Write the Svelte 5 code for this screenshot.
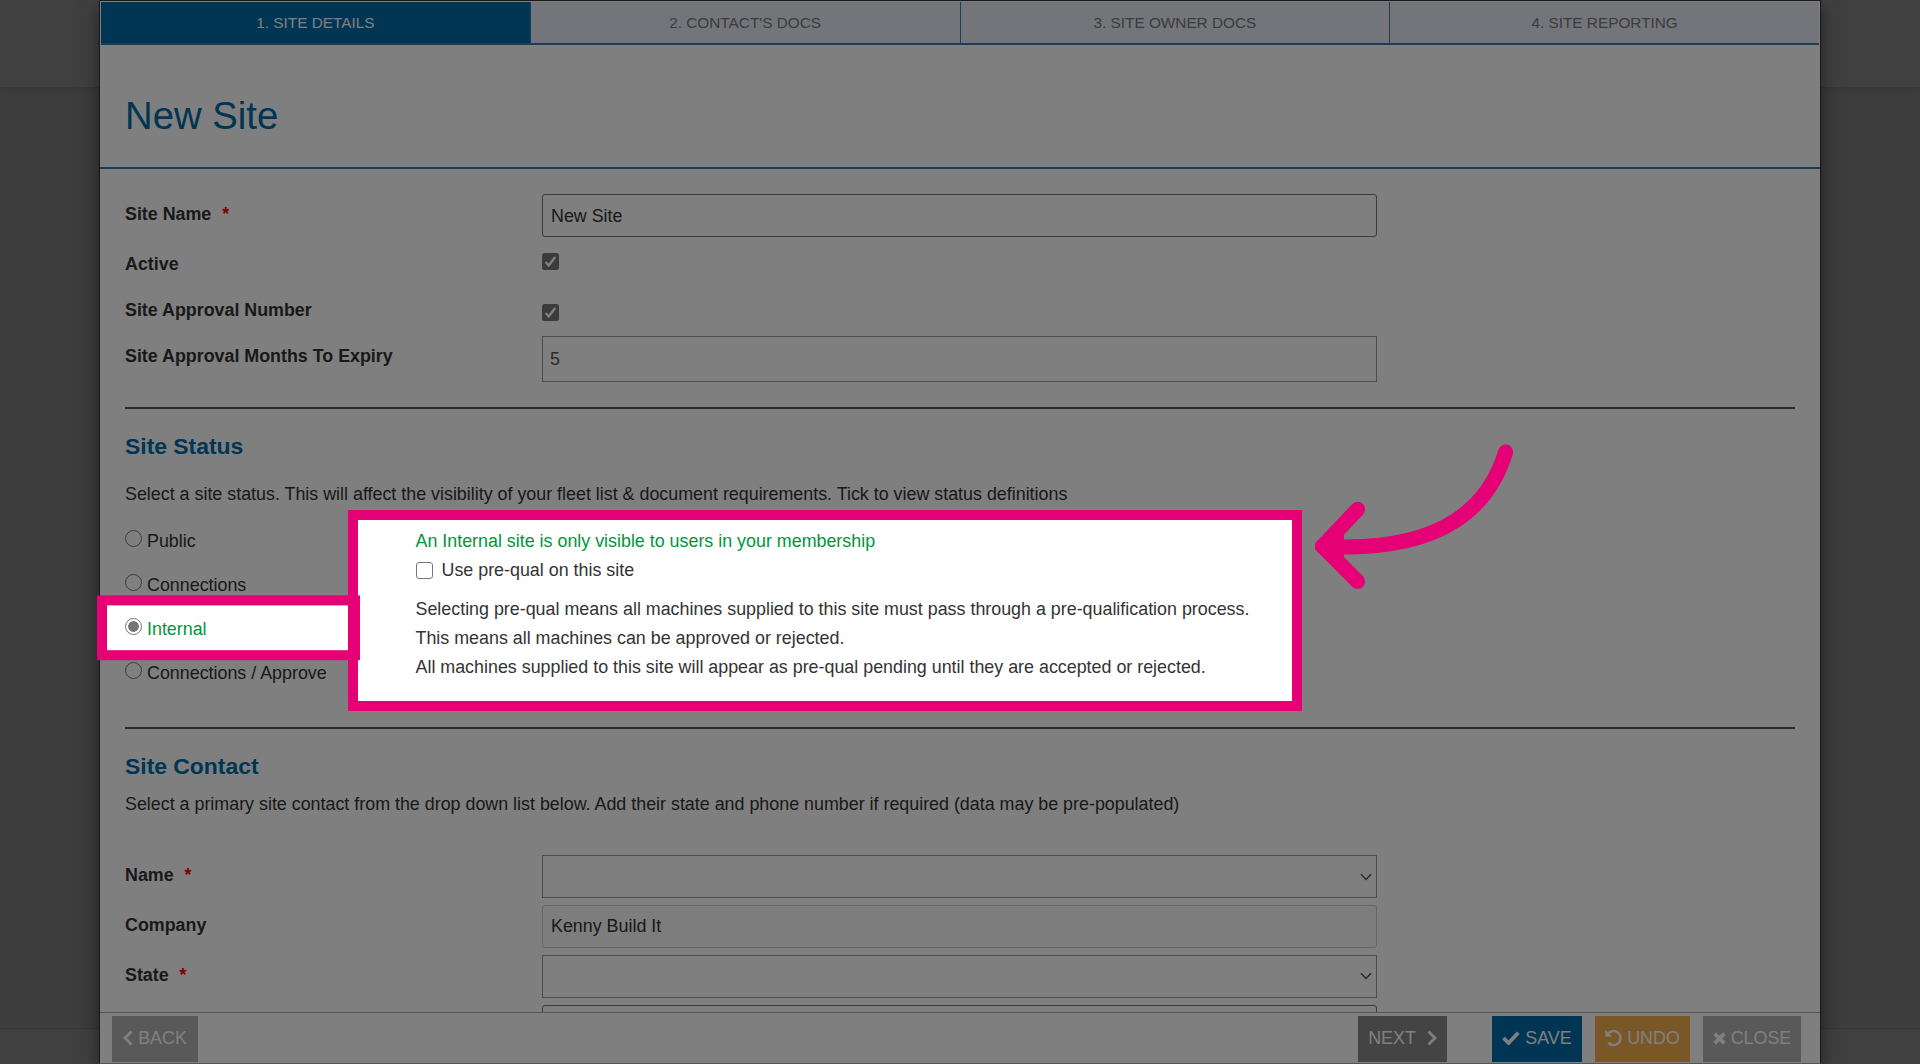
<script lang="ts">
  type Tab = { label: string; active?: boolean };

  const tabs: Tab[] = [
    { label: '1. SITE DETAILS', active: true },
    { label: "2. CONTACT'S DOCS" },
    { label: '3. SITE OWNER DOCS' },
    { label: '4. SITE REPORTING' }
  ];

  const statuses = ['Public', 'Connections', 'Internal', 'Connections / Approve'];

  let siteName = 'New Site';
  let months = '5';
  let company = 'Kenny Build It';
  let selected = 'Internal';
</script>

<div class="page">
  <div class="topbar"></div>
  <div class="bottombar"></div>

  <div class="modal">
    <nav class="tabs">
      {#each tabs as tab}
        <button class="tab" class:active={tab.active}>{tab.label}</button>
      {/each}
    </nav>

    <header><h1>New Site</h1></header>

    <div class="content">
      <div class="row tall">
        <span class="label">Site Name <i>*</i></span>
        <input class="field" bind:value={siteName} />
      </div>
      <div class="row">
        <span class="label">Active</span>
        <svg class="check upper" viewBox="0 0 17 17">
          <rect width="17" height="17" rx="2.5" fill="#767676" />
          <path d="M3.6 9 L6.7 12.4 L13.2 4" fill="none" stroke="#fff" stroke-width="2.4" />
        </svg>
      </div>
      <div class="row">
        <span class="label">Site Approval Number</span>
        <svg class="check lower" viewBox="0 0 17 17">
          <rect width="17" height="17" rx="2.5" fill="#767676" />
          <path d="M3.6 9 L6.7 12.4 L13.2 4" fill="none" stroke="#fff" stroke-width="2.4" />
        </svg>
      </div>
      <div class="row">
        <span class="label">Site Approval Months To Expiry</span>
        <input class="field months" bind:value={months} />
      </div>

      <hr />
      <h2>Site Status</h2>
      <p class="intro">
        Select a site status. This will affect the visibility of your fleet list &amp; document requirements. Tick to view status definitions
      </p>

      <div class="status">
        <div class="options">
          {#each statuses as status}
            <label class="option" class:chosen={status === selected}>
              <input type="radio" bind:group={selected} value={status} />
              <span>{status}</span>
            </label>
          {/each}
        </div>
        <div class="definition">
          <div class="green">An Internal site is only visible to users in your membership</div>
          <label class="prequal">
            <span class="box"></span>
            <span>Use pre-qual on this site</span>
          </label>
          <div class="details">
            Selecting pre-qual means all machines supplied to this site must pass through a pre-qualification process.<br />
            This means all machines can be approved or rejected.<br />
            All machines supplied to this site will appear as pre-qual pending until they are accepted or rejected.
          </div>
        </div>
      </div>

      <hr class="second" />
      <h2>Site Contact</h2>
      <p class="intro contact">
        Select a primary site contact from the drop down list below. Add their state and phone number if required (data may be pre-populated)
      </p>

      <div class="row tall">
        <span class="label">Name <i>*</i></span>
        <div class="field select">
          <svg viewBox="0 0 12 8"><path d="M1 1.2 L6 6.4 L11 1.2" /></svg>
        </div>
      </div>
      <div class="row tall">
        <span class="label">Company</span>
        <input class="field readonly" readonly value={company} />
      </div>
      <div class="row tall">
        <span class="label">State <i>*</i></span>
        <div class="field select">
          <svg viewBox="0 0 12 8"><path d="M1 1.2 L6 6.4 L11 1.2" /></svg>
        </div>
      </div>
      <div class="row tall">
        <span class="label"></span>
        <input class="field" />
      </div>
    </div>

    <footer>
      <button class="btn back">
        <svg width="10" height="16" viewBox="0 0 10 16"><path d="M8.5 1.5 L2 8 L8.5 14.5" class="line" /></svg>
        BACK
      </button>
      <span class="spacer"></span>
      <button class="btn next">
        NEXT
        <svg width="10" height="16" viewBox="0 0 10 16"><path d="M1.5 1.5 L8 8 L1.5 14.5" class="line" /></svg>
      </button>
      <button class="btn save">
        <svg width="18" height="14" viewBox="0 0 18 14"><path d="M1.5 7 L6.6 12 L16.3 1.8" class="line thick" /></svg>
        SAVE
      </button>
      <button class="btn undo">
        <svg width="17" height="18" viewBox="0 0 17 18">
          <path d="M3 4.8 A7 7 0 1 1 3.2 13.6" class="line thin" />
          <path d="M0.4 0.8 V7.4 H7.2 Z" fill="#fff" />
        </svg>
        UNDO
      </button>
      <button class="btn close">
        <svg width="13" height="13" viewBox="0 0 13 13"><path d="M1.6 1.6 L11.4 11.4 M11.4 1.6 L1.6 11.4" class="line thick" /></svg>
        CLOSE
      </button>
    </footer>
  </div>

  <!-- dimmed backdrop with two cut-outs, frames and pointer -->
  <svg class="spotlight" width="1920" height="1064" viewBox="0 0 1920 1064">
    <path
      d="M0 0H1920V1064H0Z M353 515V600H102V655H353V706H1297V515Z"
      fill="#000"
      fill-opacity="0.5"
      fill-rule="evenodd"
    />
    <g fill="none" stroke="#e50075">
      <rect x="353" y="515" width="944" height="191" stroke-width="10" />
      <rect x="102" y="600.4" width="253" height="54.8" stroke-width="10" />
      <g stroke-width="15" stroke-linecap="round" stroke-linejoin="round">
        <path d="M1505.6 452 C1490 503.3 1446.7 553.3 1322.5 546.2" />
        <path d="M1357.6 509.3 L1322.5 546.3 L1357.6 581.4" />
      </g>
      <path d="M1322.5 546.3 L1344 531 V562 Z" fill="#e50075" stroke="none" />
    </g>
  </svg>
</div>

<style>
  :global(body) {
    margin: 0;
    overflow: hidden;
  }

  .page {
    position: relative;
    height: 1064px;
    overflow: hidden;
    display: flex;
    flex-direction: column;
    align-items: center;
    background: #7a7a7a;
    color: #333;
    font-family: 'Liberation Sans', Arial, sans-serif;
    font-size: 17.88px;
    line-height: 20px;
  }

  .page * {
    box-sizing: border-box;
  }

  .topbar,
  .bottombar {
    position: absolute;
    left: 0;
    right: 0;
    background: #808080;
  }

  .topbar {
    top: 0;
    height: 88px;
    border-bottom: 1px solid #6c6c6c;
    box-shadow: 0 2px 6px rgba(0, 0, 0, 0.08);
  }

  .bottombar {
    top: 1028px;
    bottom: 0;
    border-top: 1px solid #6c6c6c;
  }

  .modal {
    position: relative;
    width: 1722px;
    height: 1064px;
    display: flex;
    flex-direction: column;
    background: #fff;
    border: 1px solid #333;
    border-bottom-color: #aaa;
    box-shadow: 0 6px 18px rgba(0, 0, 0, 0.5);
  }

  .tabs {
    display: flex;
    height: 43px;
    margin: 1px 1px 0;
    border-bottom: 2px solid #337fb5;
  }

  .tab {
    flex: 1;
    padding: 0;
    border: 0;
    border-right: 1px solid #337fb5;
    background: #e9ebf4;
    color: #777;
    font: 15.35px/20px 'Liberation Sans', Arial, sans-serif;
  }

  .tab:last-child {
    border-right: 0;
  }

  .tab.active {
    background: #006aa8;
    color: #fff;
  }

  header {
    height: 124px;
    padding: 49px 25px 0;
    border-bottom: 2px solid #337fb5;
  }

  h1 {
    margin: 0;
    color: #006aa8;
    font-size: 38.3px;
    font-weight: 400;
    line-height: 44px;
  }

  .content {
    flex: 1;
    min-height: 0;
    overflow: hidden;
    padding: 25px 25px 0;
  }

  .row {
    display: grid;
    grid-template-columns: 417px 835px;
    align-items: start;
    height: 46px;
  }

  .row.tall {
    height: 49.8px;
  }

  .label {
    padding-top: 10px;
    font-size: 17.85px;
    font-weight: 700;
  }

  .label i {
    margin-left: 6px;
    color: #f00;
    font-style: normal;
  }

  .field {
    height: 43px;
    padding: 1px 8px 0;
    border: 1px solid #767676;
    border-radius: 3px;
    background: #fff;
    color: #333;
    font: inherit;
  }

  .field.months {
    height: 46px;
    padding: 1px 7px 0;
    border-color: #999;
    border-radius: 0;
    color: #555;
  }

  .field.select {
    display: flex;
    align-items: center;
    justify-content: flex-end;
    padding: 0 4px;
    border-color: #999;
    border-radius: 0;
  }

  .field.select svg {
    width: 12px;
    height: 8px;
    fill: none;
    stroke: #555;
    stroke-width: 1.5;
  }

  .field.readonly {
    padding-top: 0;
    border-color: #ccc;
    background: #fafafa;
  }

  .check {
    width: 17px;
    height: 17px;
  }

  .upper {
    margin-top: 9px;
  }

  .lower {
    margin-top: 14px;
  }

  hr {
    height: 2px;
    margin: 25px 0 24px;
    border: 0;
    background: #555;
  }

  h2 {
    margin: 0 0 25px;
    color: #006aa8;
    font-size: 22.9px;
    line-height: 26px;
  }

  .intro {
    margin: 0;
    white-space: nowrap;
  }

  .intro.contact {
    margin: -10px 0 41.4px;
  }

  .status {
    display: grid;
    grid-template-columns: 290.5px 1fr;
    height: 223px;
    padding-top: 27px;
  }

  .option {
    display: flex;
    height: 44px;
  }

  .option input {
    appearance: none;
    flex: none;
    width: 17px;
    height: 17px;
    margin: -1px 5px 0 0;
    border: 1px solid #767676;
    border-radius: 50%;
  }

  .option.chosen {
    color: #00963c;
  }

  .option.chosen input {
    background: radial-gradient(circle, #767676 0 5px, transparent 5.6px);
  }

  .green {
    color: #00963c;
  }

  .prequal {
    display: flex;
    margin-top: 9px;
  }

  .box {
    width: 17px;
    height: 17px;
    margin: 2.5px 9px 0 0;
    border: 1px solid #767676;
    border-radius: 3px;
  }

  .details {
    margin-top: 15px;
    line-height: 29.2px;
    white-space: nowrap;
  }

  hr.second {
    margin-top: 0;
  }

  footer {
    display: flex;
    height: 51px;
    padding: 3px 19px 0 12px;
    border-top: 1px solid #aaa;
    background: #fff;
  }

  .spacer {
    flex: 1;
  }

  .btn {
    display: flex;
    align-items: center;
    justify-content: center;
    gap: 5px;
    height: 46px;
    padding: 0 0 1.5px;
    border: 0;
    color: #fff;
    font: inherit;
  }

  .line {
    fill: none;
    stroke: #fff;
    stroke-width: 2.8;
  }

  .line.thick {
    stroke-width: 3.8;
  }

  .line.thin {
    stroke-width: 2.5;
  }

  .back {
    width: 86px;
    background: #b2b2b2;
  }

  .next {
    gap: 11px;
    width: 89px;
    margin-right: 45px;
    background: #888;
  }

  .save {
    width: 90px;
    margin-right: 13px;
    background: #006aa8;
  }

  .undo {
    width: 95px;
    margin-right: 13px;
    background: #f4ae4c;
  }

  .close {
    width: 98px;
    background: #b2b2b2;
  }

  .spotlight {
    position: absolute;
    inset: 0;
  }
</style>
